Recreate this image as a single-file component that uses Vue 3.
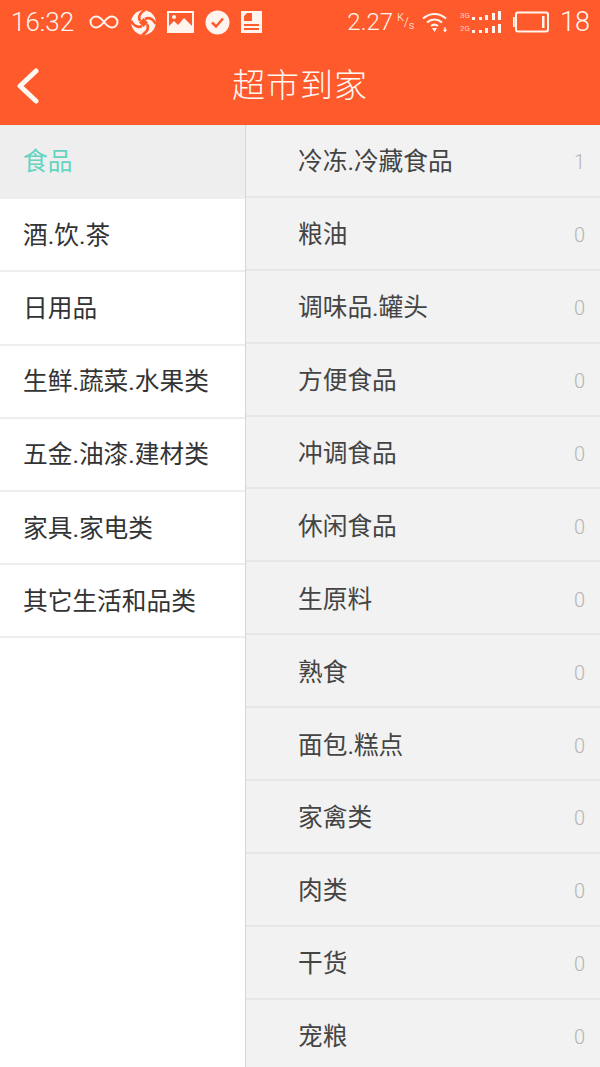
<template>
  <div class="page">
    <header class="top">
      <div class="status">
        <div class="status-left">
          <span class="clock">16:32</span>
          <svg class="ic" width="32" height="16" viewBox="0 0 32 16" fill="none" stroke="#fff5ee" stroke-width="2">
            <path d="M16 8C13 4 11 2.500 8 2.500a5.500 5.500 0 0 0 0 11c3 0 5-1.500 8-5.500s5-5.500 8-5.500a5.500 5.500 0 0 1 0 11c-3 0-5-1.500-8-5.500z" />
          </svg>
          <svg class="ic" width="25" height="25" viewBox="0 0 25 25">
            <circle cx="12.500" cy="12.500" r="12.300" fill="#fff5ee" />
            <path d="M12.500 8L17 12.500 12.500 17 8 12.500z" fill="#ff5a2c" />
            <path d="M9 11C7 7 9 3 14 0M14 9c4-2 8 0 11 5M16 14c2 4 0 8-5 11M11 16c-4 2-8 0-11-5" fill="none" stroke="#ff5a2c" stroke-width="2.600" />
          </svg>
          <svg class="ic" width="27" height="22" viewBox="0 0 27 22">
            <path fill-rule="evenodd" d="M0 0h27v22H0zM2 2v13l5-5 4 4 6-7 8 8V2z" fill="#fff5ee" />
            <circle cx="7" cy="6" r="2" fill="#fff5ee" />
          </svg>
          <svg class="ic" width="25" height="25" viewBox="0 0 25 25">
            <circle cx="12.500" cy="12.500" r="12" fill="#fff5ee" />
            <path d="M7 12.500l4 4 7-8" fill="none" stroke="#ff5a2c" stroke-width="2.500" />
          </svg>
          <svg class="ic" width="21" height="22" viewBox="0 0 21 22">
            <path fill-rule="evenodd" d="M0 0h21v22H0zM3 5v5h8V2H6zM3 13v2h15v-2zM3 17v2h15v-2z" fill="#fff5ee" />
          </svg>
        </div>
        <div class="status-right">
          <span class="speed">2.27</span>
          <span class="unit"><sup>K</sup>/<sub>s</sub></span>
          <svg class="ic wifi" width="27" height="21" viewBox="0 0 27 21" fill="none" stroke="#fff5ee" stroke-width="2.200">
            <path d="M1 6.500c7-6 16-6 23 0M5 10.500c4.500-4 10.500-4 15 0M9 14c2.500-2 4.500-2 7 0" />
            <path d="M10 16h5l-2.500 4z" fill="#fff5ee" stroke="none" />
            <path d="M23 15v4M21.500 17.500l1.500 2 1.500-2" stroke-width="1.200" />
          </svg>
          <div class="signal">
            <div v-for="label in ['3G', '2G']" :key="label" class="sig-row">
              <span class="sig-label">{{ label }}</span>
              <i v-for="(h, n) in [3, 3, 5, 7, 9]" :key="n" :style="{ height: h + 'px' }"></i>
            </div>
          </div>
          <svg class="ic" width="36" height="22" viewBox="0 0 36 22" fill="none" stroke="#fff5ee" stroke-width="2">
            <rect x="3" y="1.500" width="32" height="19" rx="2" />
            <path d="M0.800 6v10" />
            <rect x="29" y="5" width="2.500" height="12" fill="#fff5ee" stroke="none" />
          </svg>
          <span class="level">18</span>
        </div>
      </div>
      <div class="bar">
        <svg class="back" width="26" height="36" viewBox="0 0 26 36" fill="none" stroke="#fff8f2" stroke-width="5" stroke-linecap="round" stroke-linejoin="round">
          <path d="M20 3L4 18l16 15" />
        </svg>
        <h1>超市到家</h1>
      </div>
    </header>
    <main class="columns">
      <ul class="cats">
        <li v-for="(c, i) in cats" :key="c" class="cat" :class="{ on: i === 0 }">{{ c }}</li>
      </ul>
      <ul class="subs">
        <li v-for="s in subs" :key="s.name" class="sub">
          <span class="name">{{ s.name }}</span>
          <span class="num">{{ s.count }}</span>
        </li>
      </ul>
    </main>
  </div>
</template>

<script setup>
const cats = ['食品', '酒.饮.茶', '日用品', '生鲜.蔬菜.水果类', '五金.油漆.建材类', '家具.家电类', '其它生活和品类']

const subs = [
  { name: '冷冻.冷藏食品', count: 1 },
  { name: '粮油', count: 0 },
  { name: '调味品.罐头', count: 0 },
  { name: '方便食品', count: 0 },
  { name: '冲调食品', count: 0 },
  { name: '休闲食品', count: 0 },
  { name: '生原料', count: 0 },
  { name: '熟食', count: 0 },
  { name: '面包.糕点', count: 0 },
  { name: '家禽类', count: 0 },
  { name: '肉类', count: 0 },
  { name: '干货', count: 0 },
  { name: '宠粮', count: 0 },
]
</script>

<style scoped>
.page {
  width: 600px;
  height: 1067px;
  overflow: hidden;
  background: #fff;
  font-family: Roboto, "Noto Sans CJK SC", sans-serif;
  display: flex;
  flex-direction: column;
}
.top { background: #ff5a2c; height: 125px; color: #fff5ee; flex: none; }
.status {
  height: 44px;
  display: flex;
  justify-content: space-between;
  align-items: center;
  padding: 0 10px 2px 11px;
}
.status-left, .status-right { display: flex; align-items: center; }
.clock { font-size: 26px; font-weight: 300; width: 77px; }
.status-left .ic { margin-right: 11px; flex: none; }
.status-right { font-weight: 300; }
.speed { font-size: 24px; margin-right: 4px; }
.unit { font-size: 12px; width: 18px; margin-right: 7px; white-space: nowrap; }
.unit sup, .unit sub { font-size: 11px; line-height: 0; }
.wifi { margin-right: 11px; }
.signal { display: flex; flex-direction: column; gap: 4px; width: 41px; margin-right: 12px; }
.sig-row { display: flex; align-items: flex-end; gap: 3.500px; height: 9px; }
.sig-row i { width: 3px; background: #fff5ee; display: block; }
.sig-label { font-size: 8px; line-height: 9px; width: 9px; margin-right: -0.500px; white-space: nowrap; }
.level { font-size: 27px; margin-left: 11px; }
.bar {
  position: relative;
  height: 81px;
  display: flex;
  align-items: center;
  justify-content: center;
}
.bar h1 { margin: 0 0 7px; font-size: 33px; font-weight: 300; letter-spacing: 1px; color: #fff8f2; }
.back { position: absolute; left: 16px; top: 22px; }
.columns { flex: 1; display: flex; min-height: 0; }
ul { list-style: none; margin: 0; padding: 0; }
.cats { width: 245px; flex: none; background: #fff; padding-top: 1px; box-sizing: border-box; }
.cat {
  height: 73.200px;
  box-sizing: border-box;
  padding: 0 0 4px 23px;
  display: flex;
  align-items: center;
  font-size: 24.700px;
  font-weight: 400;
  color: #333;
  border-bottom: 2px solid #eeeeee;
}
.cat.on {
  height: 74.200px;
  margin-top: -1px;
  color: #63d4c1;
  background: #eeeeee;
}
.subs { flex: 1; background: #f2f2f2; border-left: 1px solid #d6d6d6; }
.sub {
  height: 72.900px;
  box-sizing: border-box;
  padding: 0 15px 0 52px;
  display: flex;
  align-items: center;
  justify-content: space-between;
  font-size: 24.700px;
  font-weight: 400;
  color: #444;
  border-bottom: 2px solid #e6e6e6;
}
.name { margin-bottom: 2px; }
.num { font-size: 20px; color: #b5b5b5; font-weight: 300; margin-top: 4px; }
</style>
